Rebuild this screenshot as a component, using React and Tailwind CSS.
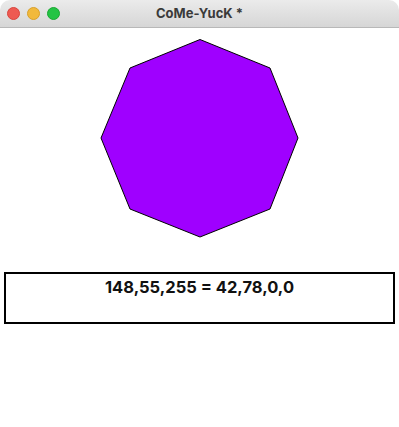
export default function App() {
  return (
    <div className="w-[399px] h-[427px] bg-white flex flex-col overflow-hidden" style={{ fontFamily: "Inter, 'Liberation Sans', sans-serif" }}>
      <div className="h-[28px] flex items-center relative bg-gradient-to-b from-[#ebebeb] to-[#d6d6d6] border-b border-[#b8b8b8] rounded-t-[10px]">
        <div className="flex gap-[7px] pl-[7px]">
          <span className="w-[13px] h-[13px] rounded-full bg-[#ee5a52] border border-[#d9453d]" />
          <span className="w-[13px] h-[13px] rounded-full bg-[#f1b93c] border border-[#d9a02a]" />
          <span className="w-[13px] h-[13px] rounded-full bg-[#23c444] border border-[#1aa832]" />
        </div>
        <div className="absolute inset-0 flex items-center justify-center text-[13px] font-bold text-[#3a3a3a]">
          CoMe-YucK *
        </div>
      </div>
      <div className="flex justify-center pt-[11px]">
        <svg width="200" height="200" viewBox="100 40 200 200">
          <polygon
            points="200,40.5 270,69 298,139 270,210 200,238 130,210 101,139 130,69"
            fill="#9f00ff"
            stroke="#000"
            strokeWidth="1"
          />
        </svg>
      </div>
      <div className="mx-[4px] mt-[33px] h-[52px] border-2 border-black flex justify-center">
        <span className="text-[16.5px] font-bold text-[#111] mt-[2px] leading-[22px]">148,55,255 = 42,78,0,0</span>
      </div>
    </div>
  );
}
